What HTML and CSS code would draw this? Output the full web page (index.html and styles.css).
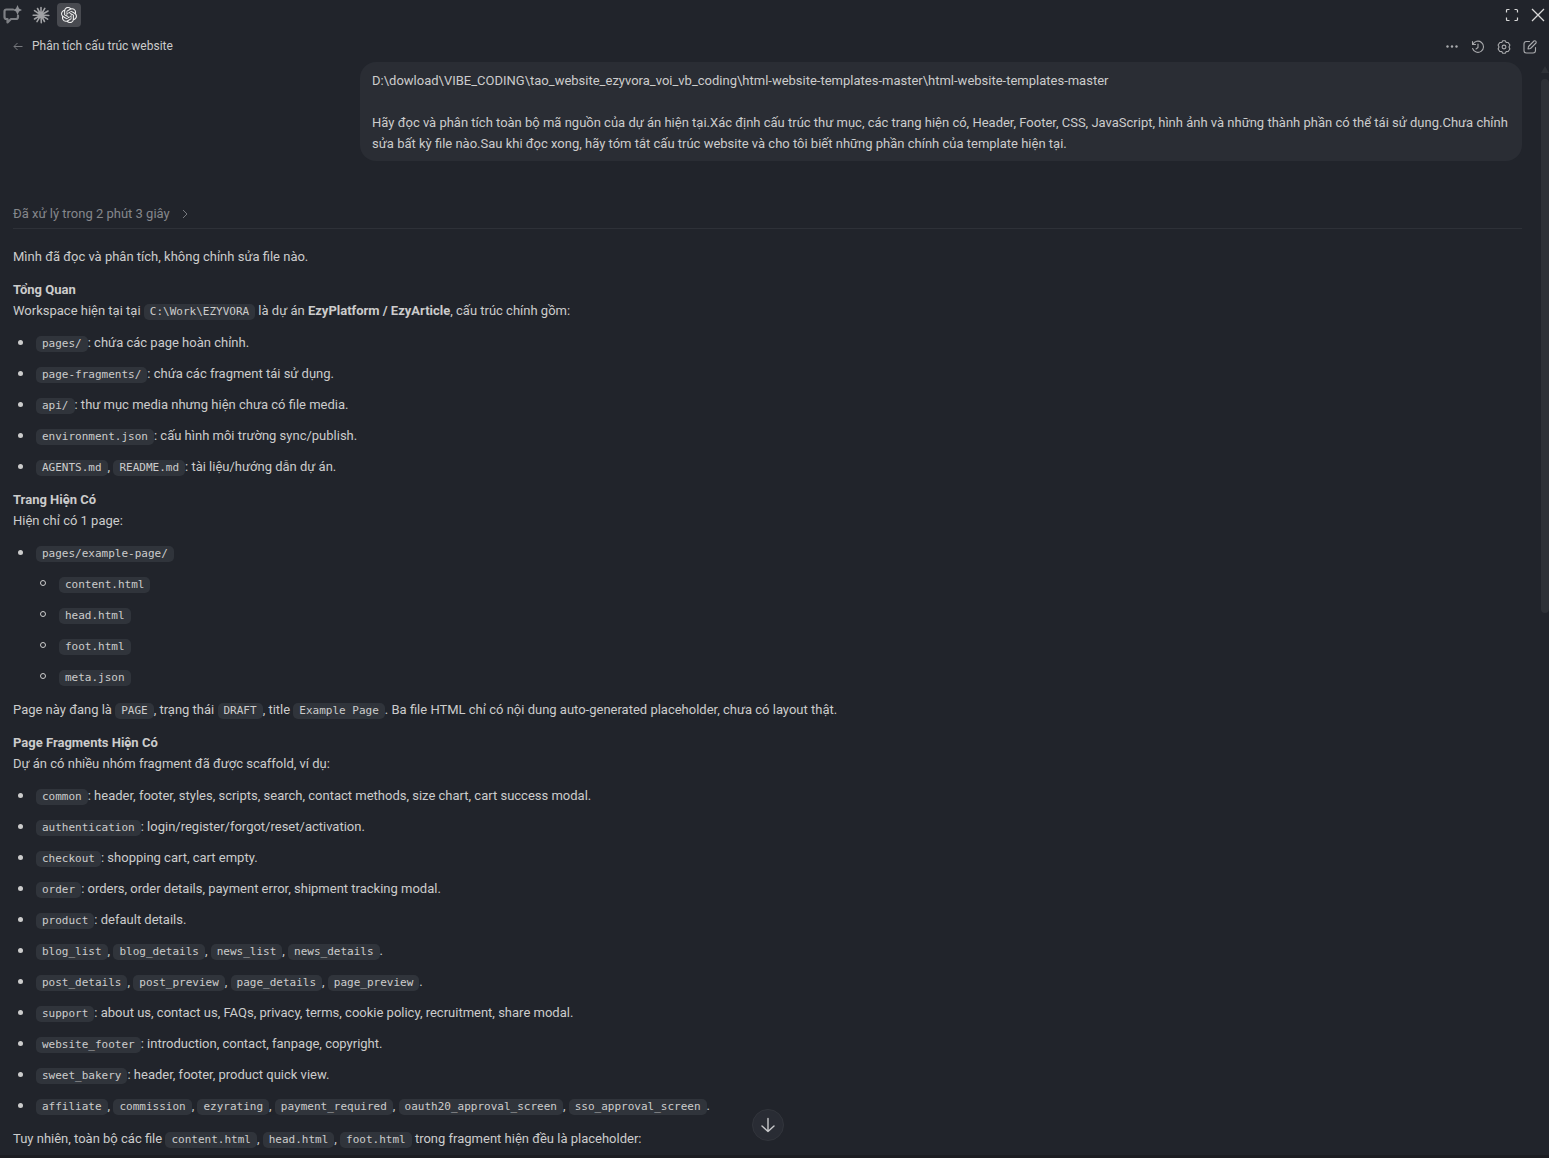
FILE: index.html
```html
<!DOCTYPE html>
<html lang="vi">
<head>
<meta charset="utf-8">
<title>Phân tích cấu trúc website</title>
<link rel="stylesheet" href="styles.css">
</head>
<body>
<div class="panel">
  <header class="tabs">
    <nav class="tab-list">
      <button class="tab" aria-label="Chat">
        <svg width="20" height="20" viewBox="1 0 20 20" fill="none" stroke="#7d7f84" stroke-width="2.200" stroke-linejoin="round" stroke-linecap="round"><path d="M11 4.500H4.500Q2.500 4.500 2.500 6.500V12Q2.500 14 4.500 14H5.500V17.500L9 14H14Q16 14 16 12V10.500"/><path d="M15.500 0L17 3.500L20 5L17 6.500L15.500 10L14 6.500L11 5L14 3.500Z" fill="#8b8d92" stroke="none"/></svg>
      </button>
      <button class="tab" aria-label="Claude">
        <svg width="18" height="18" viewBox="0 0 18 18" stroke="#a0a1a4" stroke-width="1.600" stroke-linecap="round"><path d="M9 9V1.500M9 9L12.800 2.400M9 9L16 5M9 9L16.800 9.500M9 9L15.600 13.200M9 9L12.500 15.500M9 9L9.300 16.700M9 9L5 15.600M9 9L2.500 13M9 9L1.200 9.300M9 9L2.500 4.600M9 9L5.500 2.500"/></svg>
      </button>
      <button class="tab tab-active" aria-label="Codex">
        <svg width="16" height="16" viewBox="0 0 24 24" fill="#f0f0f0"><path d="M22.282 9.821a5.985 5.985 0 0 0-.516-4.910 6.046 6.046 0 0 0-6.510-2.900A6.065 6.065 0 0 0 4.981 4.180a5.985 5.985 0 0 0-3.998 2.900 6.046 6.046 0 0 0 .743 7.097 5.980 5.980 0 0 0 .510 4.911 6.051 6.051 0 0 0 6.515 2.900A5.985 5.985 0 0 0 13.260 24a6.056 6.056 0 0 0 5.772-4.206 5.990 5.990 0 0 0 3.997-2.900 6.056 6.056 0 0 0-.747-7.073zM13.260 22.430a4.476 4.476 0 0 1-2.876-1.040l.141-.081 4.779-2.758a.795.795 0 0 0 .392-.681v-6.737l2.020 1.168a.071.071 0 0 1 .038.052v5.583a4.504 4.504 0 0 1-4.494 4.494zM3.600 18.304a4.470 4.470 0 0 1-.535-3.014l.142.085 4.783 2.759a.771.771 0 0 0 .780 0l5.843-3.369v2.332a.080.080 0 0 1-.033.062L9.740 19.950a4.500 4.500 0 0 1-6.140-1.646zM2.340 7.896a4.485 4.485 0 0 1 2.366-1.973V11.600a.766.766 0 0 0 .388.676l5.815 3.355-2.020 1.168a.076.076 0 0 1-.071 0l-4.830-2.786A4.504 4.504 0 0 1 2.340 7.872zm16.597 3.855l-5.833-3.387L15.119 7.200a.076.076 0 0 1 .071 0l4.830 2.791a4.494 4.494 0 0 1-.676 8.105v-5.678a.790.790 0 0 0-.407-.667zm2.010-3.023l-.141-.085-4.774-2.782a.776.776 0 0 0-.785 0L9.409 9.230V6.897a.066.066 0 0 1 .028-.061l4.830-2.787a4.500 4.500 0 0 1 6.680 4.660zm-12.640 4.135l-2.020-1.164a.080.080 0 0 1-.038-.057V6.075a4.500 4.500 0 0 1 7.375-3.453l-.142.080L8.704 5.460a.795.795 0 0 0-.393.681zm1.097-2.365l2.602-1.500 2.607 1.500v2.999l-2.597 1.500-2.607-1.500z"/></svg>
      </button>
    </nav>
    <div class="window-actions">
      <button class="icon" aria-label="Toàn màn hình">
        <svg width="14" height="14" viewBox="0 0 14 14" fill="none" stroke="#d8d8d8" stroke-width="1.200"><path d="M1.500 4.500V2.500Q1.500 1.500 2.500 1.500H4.500M9.500 1.500H11.500Q12.500 1.500 12.500 2.500V4.500M12.500 9.500V11.500Q12.500 12.500 11.500 12.500H9.500M4.500 12.500H2.500Q1.500 12.500 1.500 11.500V9.500"/></svg>
      </button>
      <button class="icon" aria-label="Đóng">
        <svg width="14" height="14" viewBox="0 0 14 14" fill="none" stroke="#d8d8d8" stroke-width="1.300"><path d="M1 1L13 13M13 1L1 13"/></svg>
      </button>
    </div>
  </header>

  <div class="titlebar">
    <button class="icon" aria-label="Quay lại">
      <svg width="10" height="10" viewBox="0 0 10 10" fill="none" stroke="#77797e" stroke-width="1"><path d="M9.500 4.500H1M4.500 1L1 4.500L4.500 8"/></svg>
    </button>
    <h1 class="title">Phân tích cấu trúc website</h1>
    <div class="title-actions">
      <button class="icon" aria-label="Thêm">
        <svg width="14" height="14" viewBox="0 0 14 14" fill="#a9aaad"><circle cx="2.500" cy="6.500" r="1.200"/><circle cx="7" cy="6.500" r="1.200"/><circle cx="11.500" cy="6.500" r="1.200"/></svg>
      </button>
      <button class="icon" aria-label="Lịch sử">
        <svg width="14" height="14" viewBox="0 0 14 14" fill="none" stroke="#a9aaad" stroke-width="1.100" stroke-linecap="round" stroke-linejoin="round"><path d="M1.500 1.500V4.500H4.500M1.800 4.500A5.600 5.600 0 1 1 1.600 8.500M7 4V7.500L5 9"/></svg>
      </button>
      <button class="icon" aria-label="Cài đặt">
        <svg width="14" height="14" viewBox="0 0 14 14" fill="none" stroke="#a9aaad" stroke-width="1.100" stroke-linejoin="round"><path d="M5.700 .8H8.300L9.200 2.400L11.200 2.500L12.900 5L12 7L12.900 9L11.200 11.500L9.200 11.600L8.300 13.200H5.700L4.800 11.600L2.800 11.500L1.100 9L2 7L1.100 5L2.800 2.500L4.800 2.400Z"/><circle cx="7" cy="7" r="1.900"/></svg>
      </button>
      <button class="icon" aria-label="Cuộc trò chuyện mới">
        <svg width="14" height="14" viewBox="0 0 14 14" fill="none" stroke="#a9aaad" stroke-width="1.100" stroke-linecap="round" stroke-linejoin="round"><path d="M6.500 1.500H3.500Q1 1.500 1 4V10.500Q1 13 3.500 13H10Q12.500 13 12.500 10.500V7.500M5 9L5.500 6.500L11 1Q12 .5 12.700 1.200Q13.500 2 13 3L7.500 8.500Z"/></svg>
      </button>
    </div>
  </div>

  <main class="scroller">
    <div class="thread">
      <div class="bubble">
        <p>D:\dowload\VIBE_CODING\tao_website_ezyvora_voi_vb_coding\html-website-templates-master\html-website-templates-master</p>
        <p>Hãy đọc và phân tích toàn bộ mã nguồn của dự án hiện tại.Xác định cấu trúc thư mục, các trang hiện có, Header, Footer, CSS, JavaScript, hình ảnh và những thành phần có thể tái sử dụng.Chưa chỉnh sửa bất kỳ file nào.Sau khi đọc xong, hãy tóm tắt cấu trúc website và cho tôi biết những phần chính của template hiện tại.</p>
      </div>

      <button class="worked">Đã xử lý trong 2 phút 3 giây
        <svg width="6" height="10" viewBox="0 0 6 10" fill="none" stroke="#77797e" stroke-width="1"><path d="M1 1L5 5L1 9"/></svg>
      </button>

      <article class="answer">
        <p>Mình đã đọc và phân tích, không chỉnh sửa file nào.</p>
        <h2>Tổng Quan</h2>
        <p>Workspace hiện tại tại <code>C:\Work\EZYVORA</code> là dự án <strong>EzyPlatform / EzyArticle</strong>, cấu trúc chính gồm:</p>
        <ul>
          <li><code>pages/</code>: chứa các page hoàn chỉnh.</li>
          <li><code>page-fragments/</code>: chứa các fragment tái sử dụng.</li>
          <li><code>api/</code>: thư mục media nhưng hiện chưa có file media.</li>
          <li><code>environment.json</code>: cấu hình môi trường sync/publish.</li>
          <li><code>AGENTS.md</code>, <code>README.md</code>: tài liệu/hướng dẫn dự án.</li>
        </ul>
        <h2>Trang Hiện Có</h2>
        <p>Hiện chỉ có 1 page:</p>
        <ul>
          <li><code>pages/example-page/</code>
            <ul>
              <li><code>content.html</code></li>
              <li><code>head.html</code></li>
              <li><code>foot.html</code></li>
              <li><code>meta.json</code></li>
            </ul>
          </li>
        </ul>
        <p>Page này đang là <code>PAGE</code>, trạng thái <code>DRAFT</code>, title <code>Example Page</code>. Ba file HTML chỉ có nội dung auto-generated placeholder, chưa có layout thật.</p>
        <h2>Page Fragments Hiện Có</h2>
        <p>Dự án có nhiều nhóm fragment đã được scaffold, ví dụ:</p>
        <ul>
          <li><code>common</code>: header, footer, styles, scripts, search, contact methods, size chart, cart success modal.</li>
          <li><code>authentication</code>: login/register/forgot/reset/activation.</li>
          <li><code>checkout</code>: shopping cart, cart empty.</li>
          <li><code>order</code>: orders, order details, payment error, shipment tracking modal.</li>
          <li><code>product</code>: default details.</li>
          <li><code>blog_list</code>, <code>blog_details</code>, <code>news_list</code>, <code>news_details</code>.</li>
          <li><code>post_details</code>, <code>post_preview</code>, <code>page_details</code>, <code>page_preview</code>.</li>
          <li><code>support</code>: about us, contact us, FAQs, privacy, terms, cookie policy, recruitment, share modal.</li>
          <li><code>website_footer</code>: introduction, contact, fanpage, copyright.</li>
          <li><code>sweet_bakery</code>: header, footer, product quick view.</li>
          <li><code>affiliate</code>, <code>commission</code>, <code>ezyrating</code>, <code>payment_required</code>, <code>oauth20_approval_screen</code>, <code>sso_approval_screen</code>.</li>
        </ul>
        <p>Tuy nhiên, toàn bộ các file <code>content.html</code>, <code>head.html</code>, <code>foot.html</code> trong fragment hiện đều là placeholder:</p>
      </article>
    </div>
    <div class="scrollbar" aria-hidden="true">
      <span class="scroll-arrow"></span>
      <span class="scroll-thumb"></span>
    </div>
  </main>
  <button class="jump" aria-label="Cuộn xuống cuối">
    <svg width="16" height="16" viewBox="0 0 16 16" fill="none" stroke="#c8c9cb" stroke-width="1.400" stroke-linecap="round" stroke-linejoin="round"><path d="M8 1.500V14.500M2 9L8 14.500L14 9"/></svg>
  </button>
</div>
</body>
</html>
```
FILE: styles.css
```css
*,
*::before {
  box-sizing: border-box;
}

body {
  margin: 0;
  background: #21242b;
  color: #cccccc;
  font-family: Roboto, "Noto Sans", sans-serif;
  font-size: 13px;
  line-height: 21px;
}

h1, h2, p, ul {
  margin: 0;
  padding: 0;
  font-size: 13px;
}

button {
  padding: 0;
  border: 0;
  background: none;
  color: inherit;
  font: inherit;
}

svg {
  display: block;
}

.panel {
  position: relative;
  display: flex;
  flex-direction: column;
  height: 100vh;
  overflow: hidden;
  border-bottom: 3px solid #1c1d22;
}

.tabs {
  display: flex;
  justify-content: space-between;
  align-items: center;
  height: 30px;
  padding: 0 4px 0 1px;
}

.tab-list {
  display: flex;
  gap: 4px;
}

.tab {
  display: grid;
  place-items: center;
  width: 24px;
  height: 24px;
  border-radius: 4px;
}

.tab-active {
  background: #484a50;
}

.window-actions,
.title-actions {
  display: flex;
  gap: 12px;
}

.titlebar {
  display: flex;
  align-items: center;
  height: 32px;
  padding: 1px 12px 0 13px;
}

.title {
  flex: 1;
  padding-left: 9px;
  font-size: 12px;
  font-weight: 400;
}

.scroller {
  display: flex;
  flex: 1;
  min-height: 0;
  overflow: hidden;
}

.thread {
  flex: 1;
  padding: 0 19px 0 13px;
}

.bubble {
  width: 77%;
  margin-left: auto;
  padding: 8px 12px 7px;
  border-radius: 16px;
  background: #2a2d34;
}

.bubble p + p {
  margin-top: 21px;
}

.worked {
  display: flex;
  align-items: center;
  gap: 12px;
  width: 100%;
  margin-top: 42px;
  padding-bottom: 4px;
  border-bottom: 1px solid #2e3138;
  color: #85878b;
}

.answer {
  padding-top: 17px;
}

.answer h2 {
  margin-top: 12px;
  font-weight: 700;
}

.answer ul + p {
  margin-top: 12px;
}

.answer ul {
  margin-top: 11px;
  padding-left: 23px;
  list-style: none;
}

.answer li + li,
.answer li ul {
  margin-top: 10px;
}

.answer li::before {
  content: "";
  display: inline-block;
  width: 5px;
  height: 5px;
  margin: 0 13px 2px -18px;
  border-radius: 50%;
  background: #cccccc;
}

.answer li li::before {
  width: 6px;
  height: 6px;
  margin-left: -19px;
  border: 1px solid #cccccc;
  background: none;
}

code {
  padding: 1px 6px 2px;
  border-radius: 5px;
  background: #30343b;
  font-family: "DejaVu Sans Mono", monospace;
  font-size: 11px;
  line-height: 1;
}

.scrollbar {
  display: flex;
  flex-direction: column;
  width: 8px;
  padding-top: 4px;
}

.scroll-arrow {
  height: 7px;
  background: #2e3137;
  clip-path: polygon(50% 0, 100% 100%, 0 100%);
}

.scroll-thumb {
  height: 49%;
  margin-top: 6px;
  border-radius: 4px;
  background: #2e3137;
}

.jump {
  position: absolute;
  bottom: 14px;
  left: calc(50% - 23px);
  display: grid;
  place-items: center;
  width: 32px;
  height: 32px;
  border: 1px solid #32353c;
  border-radius: 50%;
  background: #292c34;
}
```
